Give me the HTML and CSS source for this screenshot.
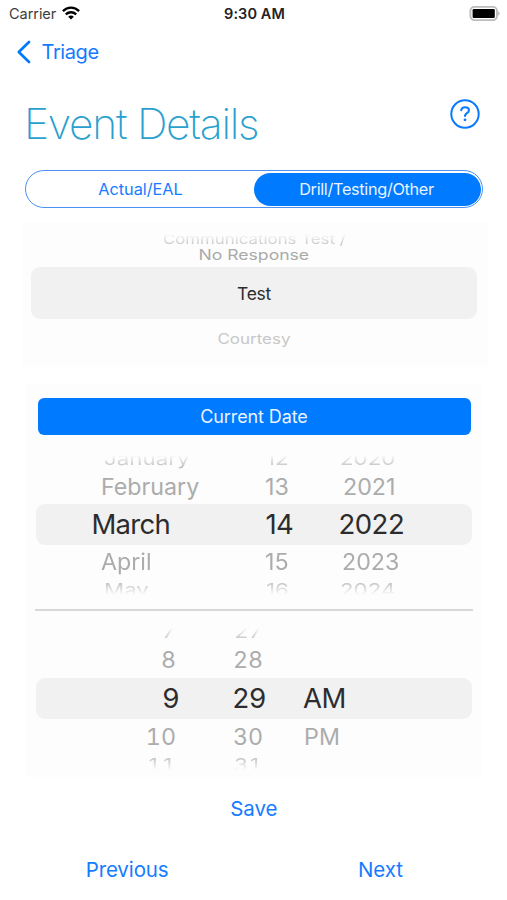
FILE: index.html
```html
<!DOCTYPE html>
<html lang="en">
<head>
<meta charset="utf-8">
<title>Event Details</title>
<link rel="stylesheet" href="styles.css">
</head>
<body>
<div class="status">
  <div class="carrier">Carrier
    <svg width="18" height="14" viewBox="0 0 18 14" fill="none" stroke="#000" stroke-width="2.4"><path d="M.9 5.1C5.6.5 12.4.5 17.1 5.1"/><path d="M3.8 8.3c3-2.8 7.4-2.8 10.4 0"/><path d="M9 13.6 6.2 10.7c1.6-1.5 4-1.5 5.6 0z" fill="#000" stroke="none"/></svg>
  </div>
  <div class="clock">9:30 AM</div>
  <svg class="battery" width="31" height="15" viewBox="0 0 31 15"><rect x="1.4" y=".9" width="26.6" height="13.2" rx="4" fill="#fff" stroke="#bcbcbc" stroke-width="1.9"/><rect x="3.6" y="3.1" width="22.2" height="8.8" rx="1.2"/><path d="M29.2 5.2c2 .8 2 3.8 0 4.6z" fill="#bcbcbc"/></svg>
</div>
<nav class="nav">
  <svg width="15" height="24" viewBox="0 0 15 24" fill="none" stroke="#007aff" stroke-width="2.7" stroke-linecap="round" stroke-linejoin="round"><path d="M13 2 2.8 12 13 22"/></svg>
  <a>Triage</a>
</nav>
<header class="heading">
  <h1>Event Details</h1>
  <svg width="30" height="30" viewBox="0 0 30 30" fill="none" stroke="#0a78ff" stroke-width="2"><circle cx="15" cy="15" r="13.7"/><path d="M11.2 11.2c.3-1.9 1.8-2.9 3.9-2.9 2.3 0 3.8 1.2 3.8 3.1 0 2.8-3.9 2.8-3.9 5.5" stroke-width="2.1" stroke-linecap="round"/><circle cx="15" cy="20.8" r="1.4" fill="#0a78ff" stroke="none"/></svg>
</header>
<div class="segments">
  <div class="segment">Actual/EAL</div>
  <div class="segment on">Drill/Testing/Other</div>
</div>
<section class="type-wheel">
  <div class="type-far"><span>Communications Test /</span></div>
  <div class="type-near"><span>No Response</span></div>
  <div class="type-selected">Test</div>
  <div class="type-next"><span>Courtesy</span></div>
</section>
<section class="when">
  <button class="current">Current Date</button>
  <div class="wheel date">
    <div class="row far up"><span>January</span><span>12</span><span>2020</span></div>
    <div class="row near"><span>February</span><span>13</span><span class="wide">2021</span></div>
    <div class="row selected"><span>March</span><span>14</span><span>2022</span></div>
    <div class="row near after"><span>April</span><span>15</span><span>2023</span></div>
    <div class="row far down"><span>May</span><span>16</span><span>2024</span></div>
  </div>
  <hr>
  <div class="wheel time">
    <div class="row far up"><span>7</span><span>27</span><span></span></div>
    <div class="row near"><span>8</span><span>28</span><span></span></div>
    <div class="row selected"><span>9</span><span>29</span><span>AM</span></div>
    <div class="row near after"><span>10</span><span>30</span><span>PM</span></div>
    <div class="row far down"><span>11</span><span>31</span><span></span></div>
  </div>
</section>
<footer class="actions">
  <a class="save">Save</a>
  <a>Previous</a>
  <a>Next</a>
</footer>
</body>
</html>
```
FILE: styles.css
```css
* { box-sizing: border-box; }
body {
  margin: 0;
  height: 900px;
  overflow: hidden;
  background: #fff;
  color: #2c2c2e;
  font-family: Inter, "Liberation Sans", sans-serif;
}
.status {
  display: grid;
  grid-template-columns: 1fr auto 1fr;
  align-items: center;
  height: 26px;
  padding: 1px 7px 0 9px;
  font-size: 14.5px;
  color: #3c3c3c;
}
.carrier { display: flex; align-items: center; gap: 6px; letter-spacing: -.05px; }
.carrier svg { margin-top: -2px; }
.clock { font-weight: 600; letter-spacing: .1px; color: #222; }
.battery { justify-self: end; margin-top: -1px; }
.nav {
  display: flex;
  align-items: center;
  gap: 11px;
  height: 50px;
  padding: 2px 0 0 15.5px;
  color: #147aff;
  font-size: 20px;
  letter-spacing: -.4px;
}
.heading {
  display: flex;
  justify-content: space-between;
  height: 94px;
  padding: 23px 27px 0 24px;
}
h1 {
  margin: 0;
  font-size: 42.5px;
  line-height: 49px;
  font-weight: 200;
  letter-spacing: -1.25px;
  color: #2aa0cf;
}
.segments {
  display: grid;
  grid-template-columns: 1fr 1fr;
  width: 458px;
  height: 38px;
  margin: 0 25px;
  padding: 2px 1px;
  border: 1.5px solid #4a90f5;
  border-radius: 19px;
  font-size: 16.3px;
  line-height: 33px;
  text-align: center;
  color: #167cff;
}
.segment { letter-spacing: -.02px; border-radius: 17px; }
.on { padding-right: 2px; background: #007aff; color: #e8f3ff; letter-spacing: -.33px; }
.type-wheel {
  width: 466px;
  height: 145px;
  margin: 14px 0 0 22px;
  padding: 10px 11px 0 9px;
  background: #fdfdfd;
  text-align: center;
}
.type-wheel span { display: inline-block; }
.type-far { height: 16px; line-height: 15px; font-size: 17px; color: #c4c4c4; -webkit-mask-image: linear-gradient(transparent 2px, #000 13px); mask-image: linear-gradient(transparent 2px, #000 13px); }
.type-far span { transform: scale(.99, .8); }
.type-near { height: 19px; line-height: 15px; font-size: 16px; color: #aaa; }
.type-near span { transform: translateX(-.5px) scale(1.1, .9); }
.type-selected {
  height: 52px;
  border-radius: 9px;
  background: #f1f1f1;
  font-size: 17.5px;
  line-height: 53px;
  letter-spacing: -.3px;
}
.type-next { height: 40px; line-height: 40px; font-size: 16px; color: #c8c8c8; }
.type-next span { transform: translateX(-.5px) scale(1.06, .9); }
.when {
  width: 456px;
  height: 393px;
  margin: 17px 0 0 25px;
  padding: 14px 9px 0 11px;
  background: #fdfdfd;
}
.current {
  display: block;
  width: 433px;
  height: 37px;
  margin-left: 1.5px;
  padding: 0;
  border: 0;
  border-radius: 6px;
  background: #007aff;
  color: #e8f3ff;
  font: 18px Inter, "Liberation Sans", sans-serif;
  letter-spacing: -.1px;
}
.wheel { display: grid; grid-template-rows: 24px 33px 41px 33px 26px; }
.date { margin-top: 12px; }
.row { display: grid; align-items: center; font-size: 23px; color: #acacac; }
.date .row { grid-template-columns: 174px 73px 1fr; padding-left: 55.5px; }
.time .row { grid-template-columns: 82px 86px 1fr; padding-left: 61px; }
.row span { transform-origin: left center; white-space: nowrap; }
.near span { line-height: 30px; transform: translateY(-1px) scale(1.01, .98); }
.after span { transform: scale(1.01, .98); }
.time .after span { transform: translateY(1px) scale(1.01, .98); }
.far { color: #bbb; line-height: 26px; }
.far span { transform: translateY(-1px) scale(.97, .75); }
.row.up { align-items: end; -webkit-mask-image: linear-gradient(transparent 8px, #000 21px); mask-image: linear-gradient(transparent 8px, #000 21px); }
.down { -webkit-mask-image: linear-gradient(#000 3px, transparent 17px); mask-image: linear-gradient(#000 3px, transparent 17px); }
.selected { border-radius: 9px; background: #f1f1f1; color: #2c2c2e; font-size: 27.5px; letter-spacing: -.75px; }
.selected span { line-height: 40px; margin-top: -2px; }
.selected span:nth-child(3) { letter-spacing: -.5px; }
.date .near { padding-left: 65px; grid-template-columns: 164px 77px 1fr; }
.date .far { padding-left: 68px; grid-template-columns: 162px 74px 1fr; }
.date .near .wide { padding-left: 1px; }
hr { width: 438px; height: 2px; margin: 5px 0 0 -1px; border: 0; background: #d8d8d8; }
.time { margin-top: 9px; grid-template-rows: 24px 34px 41px 34px 25px; font-variant-numeric: tabular-nums; }
.time .row span:first-child { text-align: right; transform-origin: right center; }
.time .row span:nth-child(2) { padding-left: 54px; transform-origin: 54px center; }
.time .row span:nth-child(3) { padding-left: 38px; transform-origin: 38px center; }
.time .selected span:nth-child(2) { padding-left: 53px; letter-spacing: -1px; }
.time .near, .time .far { padding-left: 58px; }
.time .near span:nth-child(2) { padding-left: 57px; }
.time .far span:nth-child(2) { padding-left: 58px; }
.time .near span:nth-child(3) { padding-left: 42px; }
.actions {
  display: grid;
  grid-template-columns: 1fr 1fr;
  justify-items: center;
  height: 122px;
  margin-top: 1px;
  padding-left: .5px;
  font-size: 20.5px;
  line-height: 61px;
  letter-spacing: -.1px;
  color: #167cff;
}
.save { grid-column: 1 / 3; }
```
